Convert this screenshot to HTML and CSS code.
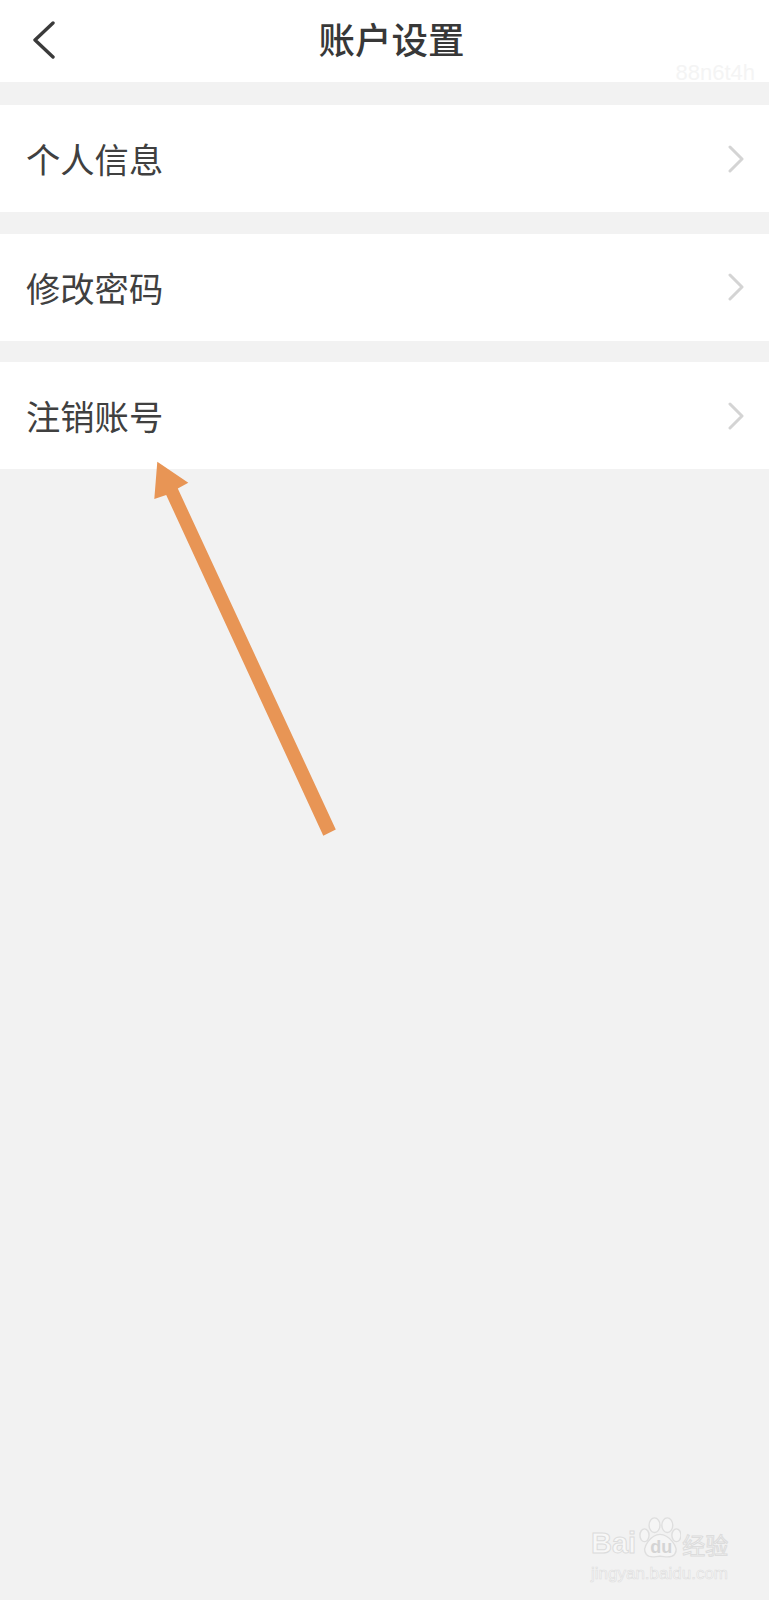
FILE: index.html
```html
<!DOCTYPE html>
<html lang="zh-CN">
<head>
  <meta charset="UTF-8">
  <meta name="viewport" content="width=device-width, initial-scale=1.0">
  <title>账户设置</title>
  <link rel="stylesheet" href="styles.css">
</head>
<body>
  <div class="page">
    <div class="header">
      <svg class="back-icon" width="26" height="38" viewBox="0 0 26 38">
        <path d="M22 2 L4 19 L22 36" fill="none" stroke="#3a3a3a" stroke-width="3.4" stroke-linecap="round" stroke-linejoin="round"/>
      </svg>
      <h1 class="title">账户设置</h1>
      <span class="user-mark">88n6t4h</span>
    </div>

    <div class="row">
      <span class="row-label">个人信息</span>
      <svg class="row-arrow" width="16" height="28" viewBox="0 0 16 28"><path d="M2 2 L14 14 L2 26" fill="none" stroke="#d4d4d4" stroke-width="3" stroke-linecap="round" stroke-linejoin="round"/></svg>
    </div>
    <div class="row">
      <span class="row-label">修改密码</span>
      <svg class="row-arrow" width="16" height="28" viewBox="0 0 16 28"><path d="M2 2 L14 14 L2 26" fill="none" stroke="#d4d4d4" stroke-width="3" stroke-linecap="round" stroke-linejoin="round"/></svg>
    </div>
    <div class="row">
      <span class="row-label">注销账号</span>
      <svg class="row-arrow" width="16" height="28" viewBox="0 0 16 28"><path d="M2 2 L14 14 L2 26" fill="none" stroke="#d4d4d4" stroke-width="3" stroke-linecap="round" stroke-linejoin="round"/></svg>
    </div>

    <!-- annotation arrow drawn over the screenshot -->
    <svg class="pointer" width="200" height="390" viewBox="0 0 200 390">
      <path d="M7.3 6.7 L38.3 27.7 L27.8 33.5 L185.8 374.5 L173.3 380.7 L16.2 40 L4.3 44 Z" fill="#e89555"/>
    </svg>

    <div class="baidu-mark">
      <div class="baidu-top">
        <span class="baidu-word">Bai</span>
        <span class="baidu-paw">
          <svg width="42" height="42" viewBox="0 0 46 46">
            <g fill="#f5f5f5" stroke="#dedede" stroke-width="1.5">
              <ellipse cx="17" cy="9" rx="6" ry="8"/>
              <ellipse cx="31" cy="9" rx="6" ry="8"/>
              <ellipse cx="6" cy="20" rx="5" ry="7"/>
              <ellipse cx="41" cy="20" rx="5" ry="7"/>
              <path d="M23 19 C32 19 45 33 39 41 C34 46 28 43 23 43 C18 43 12 46 8 41 C2 33 14 19 23 19 Z"/>
            </g>
          </svg>
          <span class="baidu-du">du</span>
        </span>
        <span class="baidu-cn">经验</span>
      </div>
      <div class="baidu-url">jingyan.baidu.com</div>
    </div>
  </div>
</body>
</html>
```

FILE: styles.css
```css
* {
  box-sizing: border-box;
}

body {
  margin: 0;
  background-color: #f2f2f2;
  font-family: "Noto Sans CJK SC", "Liberation Sans", sans-serif;
}

.page {
  position: relative;
  height: 1600px;
  overflow: hidden;
}

.header {
  position: relative;
  height: 82px;
  background-color: #fff;
  display: flex;
  align-items: center;
  justify-content: center;
  padding-left: 14px;
  margin-bottom: 23px;
}

.back-icon {
  position: absolute;
  left: 31px;
  top: 21px;
}

.title {
  margin: 0;
  font-size: 36.5px;
  font-weight: 500;
  color: #383838;
  line-height: 1;
  position: relative;
  top: -2px;
}

.user-mark {
  position: absolute;
  right: 14px;
  top: 61px;
  font-family: "Liberation Sans", sans-serif;
  font-size: 22px;
  line-height: 24px;
  color: #f4f4f4;
}

.row {
  height: 107px;
  background-color: #fff;
  display: flex;
  align-items: center;
  justify-content: space-between;
  padding: 0 25px 0 26px;
  margin-bottom: 21.5px;
}

.row-label {
  font-size: 34.3px;
  color: #404040;
  line-height: 1;
}

.pointer {
  position: absolute;
  left: 150px;
  top: 455px;
}

.baidu-mark {
  position: absolute;
  left: 591px;
  top: 1516px;
  width: 150px;
  color: #f7f7f7;
  font-family: "Liberation Sans", sans-serif;
}

.baidu-top {
  display: flex;
  align-items: flex-end;
  height: 43px;
}

.baidu-word {
  font-size: 29px;
  line-height: 32px;
  font-weight: 700;
  -webkit-text-stroke: 1px #dcdcdc;
}

.baidu-paw {
  position: relative;
  width: 42px;
  height: 42px;
  margin-left: 3px;
  flex-shrink: 0;
}

.baidu-du {
  position: absolute;
  left: 11px;
  bottom: 2px;
  font-size: 18px;
  line-height: 20px;
  font-weight: 700;
  color: #d4d4d4;
}

.baidu-cn {
  font-family: "Noto Sans CJK SC", sans-serif;
  font-size: 23px;
  line-height: 30px;
  margin-left: 1px;
  white-space: nowrap;
  -webkit-text-stroke: 1px #dcdcdc;
}

.baidu-url {
  font-size: 17px;
  line-height: 20px;
  margin-top: 5px;
  -webkit-text-stroke: 0.6px #dedede;
}
```
